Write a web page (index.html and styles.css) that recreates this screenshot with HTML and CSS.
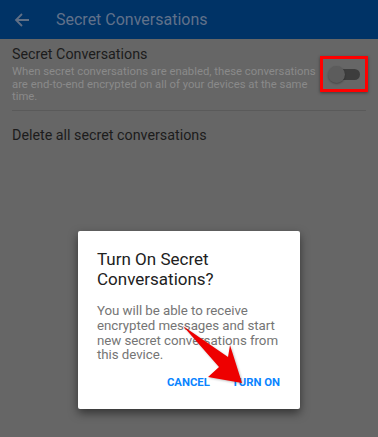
FILE: index.html
```html
<!DOCTYPE html>
<html>
<head>
<meta charset="utf-8">
<link rel="stylesheet" href="styles.css">
</head>
<body>
<div class="appbar">
  <svg class="back" width="16" height="16" viewBox="0 0 16 16"><path d="M15 8H2M8 2L2 8l6 6" fill="none" stroke="#5f6f85" stroke-width="1.8"/></svg>
  <span class="appbar-title">Secret Conversations</span>
</div>
<div class="settings">
  <div class="row row-toggle">
    <div class="row-text">
      <div class="row-title">Secret Conversations</div>
      <div class="row-desc">When secret conversations are enabled, these conversations are end-to-end encrypted on all of your devices at the same time.</div>
    </div>
    <div class="toggle-box">
      <div class="toggle"><span class="thumb"></span></div>
    </div>
  </div>
  <div class="divider"></div>
  <div class="row row-plain">
    <div class="row-title">Delete all secret conversations</div>
  </div>
</div>
<div class="overlay">
  <div class="dialog">
    <div class="dialog-title">Turn On Secret Conversations?</div>
    <div class="dialog-body">You will be able to receive encrypted messages and start new secret conversations from this device.</div>
    <div class="dialog-actions">
      <span class="btn">CANCEL</span>
      <span class="btn">TURN ON</span>
    </div>
    <svg class="pointer" width="70" height="70" viewBox="0 0 70 70">
      <path d="M3 6 L48 37 L50 25 L62 63 L28 57 L39 47 Z" fill="#ee0000"/>
    </svg>
  </div>
</div>
</body>
</html>
```
FILE: styles.css
```css
html, body {
  margin: 0;
  padding: 0;
}
body {
  width: 378px;
  height: 437px;
  background: #666666;
  font-family: Roboto, "Noto Sans", sans-serif;
  position: relative;
  overflow: hidden;
}
.appbar {
  height: 39px;
  background: #003366;
  display: flex;
  align-items: center;
  padding-left: 14px;
  box-sizing: border-box;
}
.back {
  margin-right: 26px;
}
.appbar-title {
  color: #60718a;
  font-size: 16px;
}
.settings {
  padding: 0 12px;
}
.row-toggle {
  display: flex;
  align-items: flex-start;
  padding-top: 6px;
}
.row-text {
  flex: 1;
}
.row-title {
  color: #1c1c1c;
  font-size: 14.3px;
  line-height: 18px;
}
.row-desc {
  color: #8a8a8a;
  font-size: 11.3px;
  line-height: 12.7px;
  margin-top: 3px;
  width: 308px;
}
.toggle-box {
  width: 44px;
  height: 30px;
  border: 3px solid #ff0000;
  margin-top: 11px;
  margin-right: -2px;
  display: flex;
  align-items: center;
  justify-content: center;
  box-shadow: 0 1px 3px rgba(0,0,0,.4);
}
.toggle {
  width: 26px;
  height: 11px;
  background: #3d3d3d;
  border-radius: 6px;
  position: relative;
  margin-left: 6px;
}
.thumb {
  position: absolute;
  left: -6px;
  top: -3px;
  width: 17px;
  height: 17px;
  border-radius: 50%;
  background: #5c5c5c;
  box-shadow: 0 1px 2px rgba(0,0,0,.3);
}
.divider {
  height: 1px;
  background: #5a5a5a;
  margin-top: 6px;
}
.row-plain {
  padding-top: 15px;
}
.overlay {
  position: absolute;
  left: 0;
  top: 231px;
  width: 378px;
  display: flex;
  justify-content: center;
}
.dialog {
  width: 222px;
  height: 178px;
  box-sizing: border-box;
  background: #ffffff;
  border-radius: 2px;
  box-shadow: 0 4px 10px rgba(0,0,0,.5);
  padding: 18px 19px 0 19px;
  position: relative;
}
.dialog-title {
  color: #212121;
  font-size: 17px;
  line-height: 20px;
}
.dialog-body {
  color: #757575;
  font-size: 13.3px;
  letter-spacing: -0.05px;
  line-height: 14.8px;
  margin-top: 15px;
}
.dialog-actions {
  display: flex;
  justify-content: flex-end;
  gap: 22px;
  margin-top: 13px;
  padding-right: 1px;
}
.btn {
  color: #0a84ff;
  font-weight: bold;
  font-size: 11.3px;
}
.pointer {
  position: absolute;
  left: 102px;
  top: 89px;
  filter: drop-shadow(1px 1px 1px rgba(0,0,0,.25));
}
```
